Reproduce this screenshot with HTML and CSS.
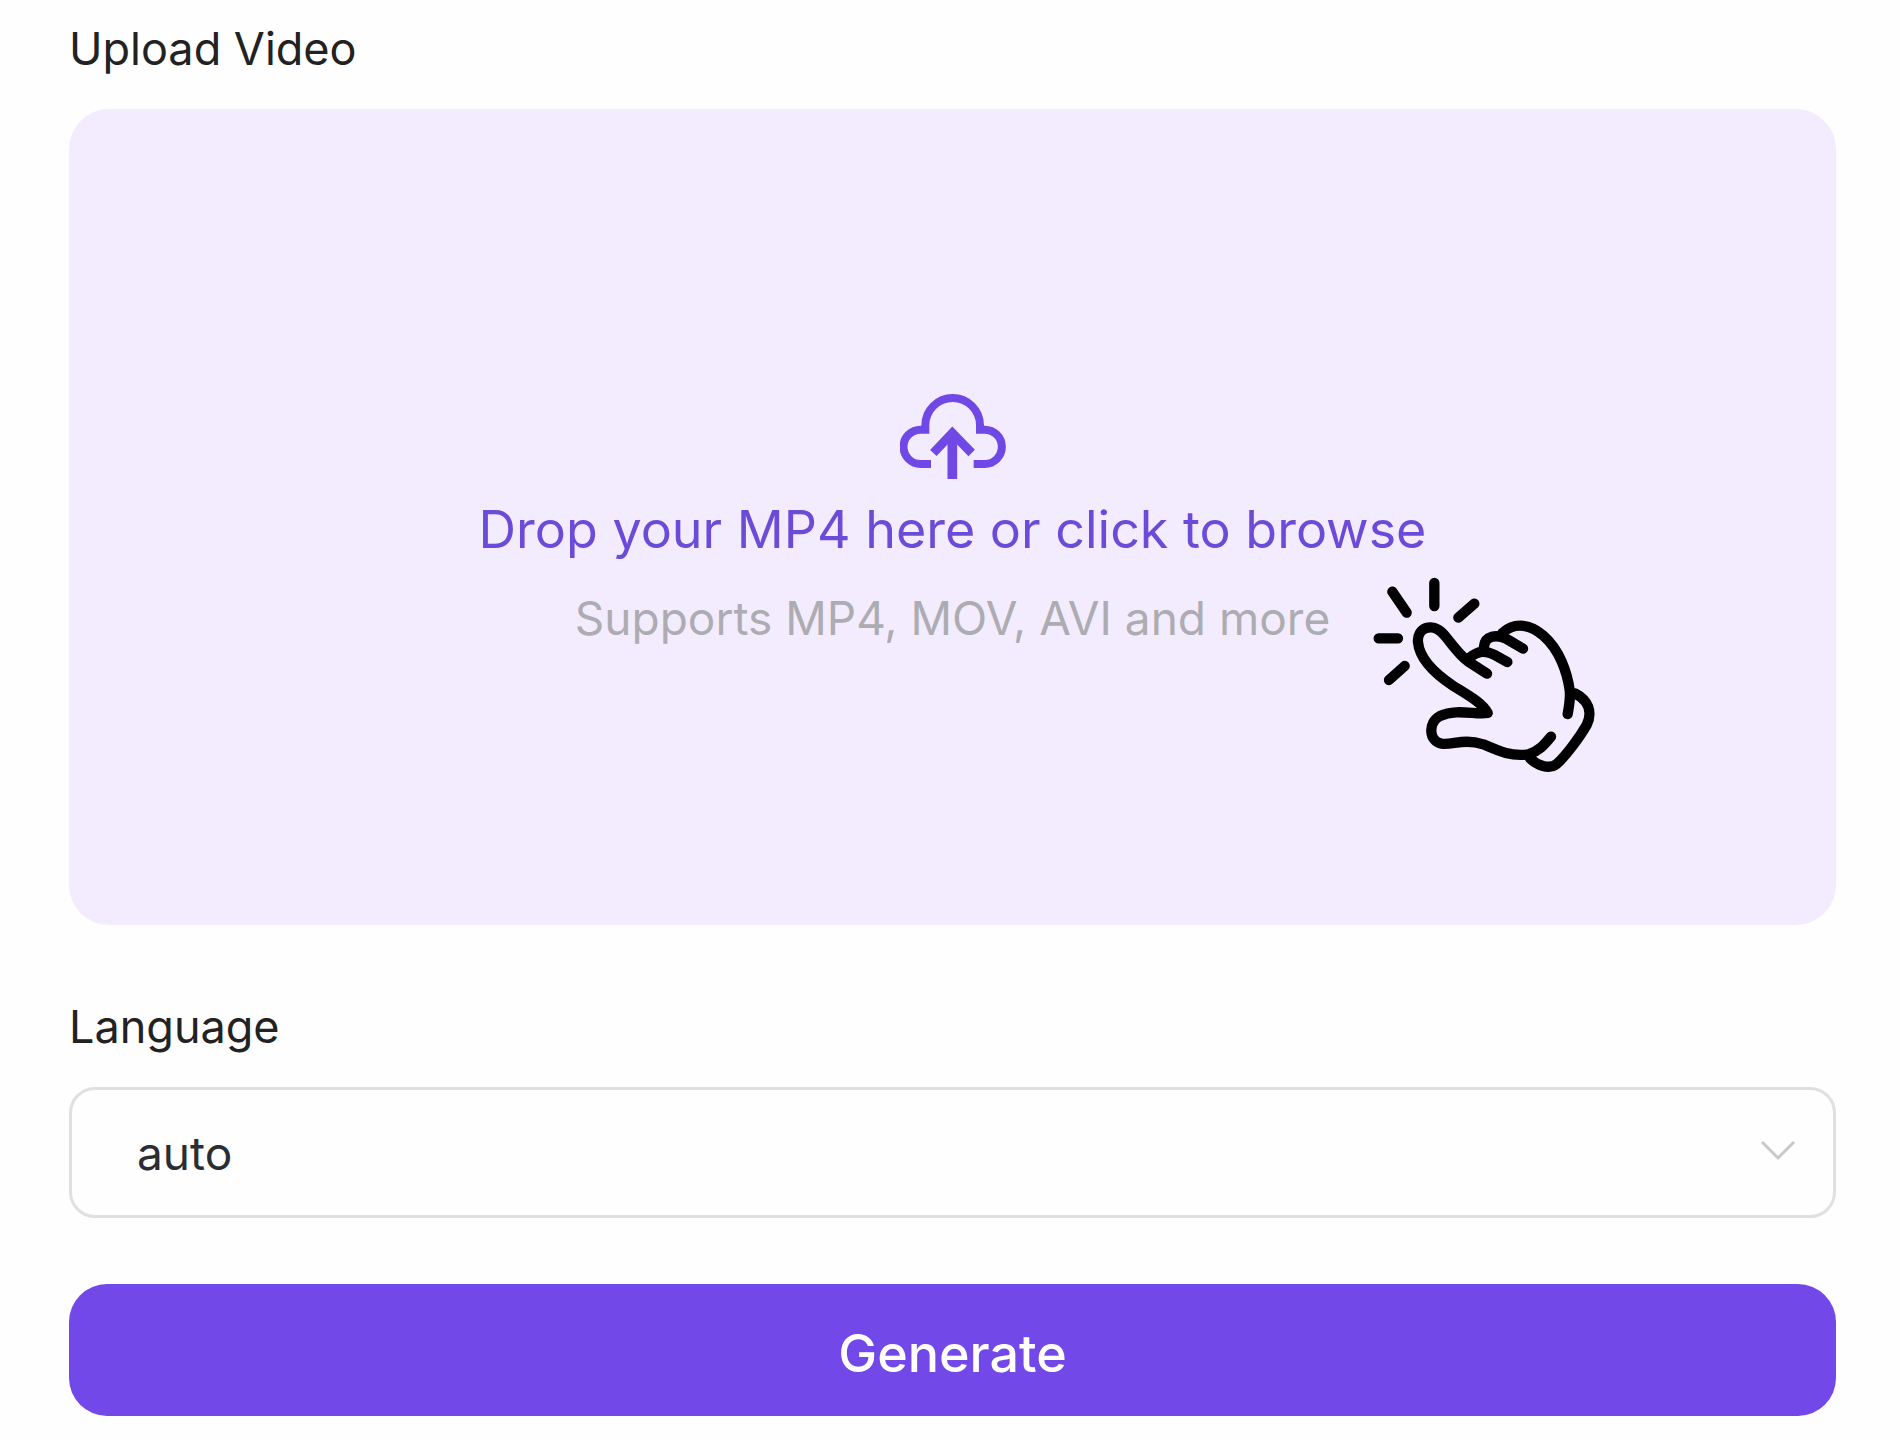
FILE: index.html
```html
<!DOCTYPE html>
<html lang="en">
<head>
  <meta charset="utf-8">
  <meta name="viewport" content="width=device-width, initial-scale=1">
  <title>Upload Video</title>
  <link rel="stylesheet" href="styles.css">
</head>
<body>
  <form class="form">
    <label class="field-label" for="video">Upload Video</label>
    <label class="dropzone">
      <input class="file-input" id="video" type="file" accept="video/*">
      <svg class="cloud" viewBox="60 40 318 264" aria-hidden="true">
        <path d="M153 253H122a51 51 0 0 1 0-103H136V137a82 82 0 0 1 164 0V150H314a51 51 0 0 1 0 103H281" stroke-width="24"/>
        <path d="M160 220L217 160L275 220" stroke-width="27"/>
        <path d="M217 298V165" stroke-width="29"/>
      </svg>
      <span class="drop-title">Drop your MP4 here or click to browse</span>
      <span class="drop-hint">Supports MP4, MOV, AVI and more</span>
      <svg class="hand" viewBox="0 0 750 690" aria-hidden="true">
        <path d="M223 69V138M97 95L140 158M343 131L295 173M56 235H114M134 318L87 360"/>
        <path d="M381 341L325 305C292 280 272 246 250 222C215 184 170 205 174 247C179 300 230 345 280 378C326 407 366 428 383 459C345 465 290 445 240 468C203 487 206 545 245 551C280 555 310 535 370 553C420 575 455 590 505 583C540 572 556 550 573 530"/>
        <path d="M510 595C530 615 567 630 590 612C620 585 660 530 680 495C699 455 684 420 645 400"/>
        <path d="M623 462C628 435 632 415 629 390C622 340 600 270 550 227C513 194 465 184 427 219"/>
        <path d="M489 266L440 237C410 222 375 227 372 260"/>
        <path d="M442 306L408 287C375 270 355 272 330 292"/>
      </svg>
    </label>
    <label class="field-label" for="language">Language</label>
    <div class="select-wrap">
      <select class="select" id="language">
        <option>auto</option>
      </select>
      <svg class="chevron" viewBox="0 0 34 20" aria-hidden="true"><path d="M1 1L17 17L33 1"/></svg>
    </div>
    <button class="submit" type="button">Generate</button>
  </form>
</body>
</html>
```
FILE: styles.css
```css
* {
  box-sizing: border-box;
}

body {
  margin: 0;
  background: #fefefe;
  color: #222;
  font-family: Inter, "Liberation Sans", sans-serif;
  font-size: 46px;
  line-height: 56px;
}

.form {
  display: flex;
  flex-direction: column;
  min-height: 100vh;
  padding: 21px 64px 24px 69px;
}

.field-label {
  align-self: flex-start;
  margin-bottom: 32px;
  font-size: 45px;
}

.dropzone {
  position: relative;
  display: flex;
  flex: 1;
  flex-direction: column;
  align-items: center;
  justify-content: center;
  min-height: 400px;
  margin-bottom: 74px;
  padding-top: 4px;
  border-radius: 40px;
  background: #f3ecff;
  text-align: center;
  cursor: pointer;
}

.file-input {
  position: absolute;
  width: 1px;
  height: 1px;
  opacity: 0;
}

.cloud {
  width: 106px;
  height: 88px;
  margin-bottom: 13px;
  fill: none;
  stroke: #6f48e6;
}

.drop-title {
  margin-bottom: 24px;
  color: #6c4bd8;
  font-size: 52px;
  line-height: 72px;
}

.drop-hint {
  color: #adacb2;
}

.hand {
  position: absolute;
  top: calc(50% + 43px);
  left: calc(50% + 407px);
  width: 250px;
  height: 230px;
  fill: none;
  stroke: #000;
  stroke-width: 31;
  stroke-linecap: round;
  stroke-linejoin: round;
}

.select-wrap {
  position: relative;
  margin-bottom: 66px;
}

.select {
  display: block;
  width: 100%;
  height: 131px;
  padding: 0 100px 0 65px;
  border: 3px solid #e0e0e0;
  border-radius: 26px;
  background: #fefefe;
  color: #2a2e33;
  font: inherit;
  appearance: none;
}

.chevron {
  position: absolute;
  top: 54px;
  right: 41px;
  width: 34px;
  height: 20px;
  fill: none;
  stroke: #c8c8c8;
  stroke-width: 3;
  pointer-events: none;
}

.submit {
  height: 132px;
  padding: 8px 0 0;
  border: 0;
  border-radius: 38px;
  background: #7248e8;
  color: #fff;
  font: inherit;
  font-size: 52px;
  font-weight: 500;
  cursor: pointer;
}
```
